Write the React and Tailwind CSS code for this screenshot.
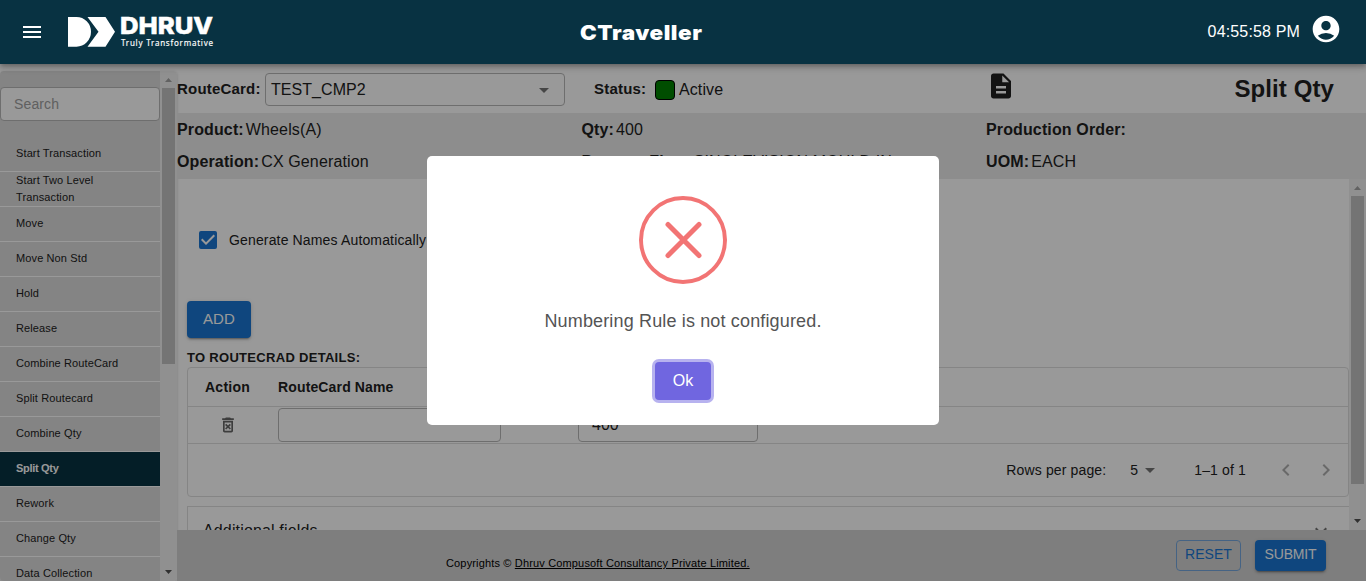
import React from 'react';
import { MdMenu, MdAccountCircle, MdDescription, MdArrowDropDown, MdChevronLeft, MdChevronRight, MdExpandMore, MdOutlineDeleteForever, MdCheckBox } from 'react-icons/md';

const items = [
  'Start Transaction',
  'Start Two Level Transaction',
  'Move',
  'Move Non Std',
  'Hold',
  'Release',
  'Combine RouteCard',
  'Split Routecard',
  'Combine Qty',
  'Split Qty',
  'Rework',
  'Change Qty',
  'Data Collection',
];

function Logo() {
  return (
    <svg width="156" height="40" viewBox="0 -3 156 40" fill="#fff" className="block">
      <path d="M1 2h8.500a14.500 14.850 0 0 1 0 29.700h-8.500z" />
      <path d="M20.500 2h18l9.500 14.850l-9.500 14.850h-18l11-14.850z" />
      <text x="53" y="19" fontFamily="Inter, sans-serif" fontWeight="800" fontSize="23" textLength="93" lengthAdjust="spacingAndGlyphs" stroke="#fff" strokeWidth="0.500">DHRUV</text>
      <text x="54" y="30.500" fontFamily="'Noto Sans', sans-serif" fontWeight="400" fontSize="8" textLength="92" stroke="#fff" strokeWidth="0.150">Truly Transformative</text>
    </svg>
  );
}

function Header() {
  return (
    <header className="relative z-20 flex h-16 shrink-0 items-center bg-[#083242] text-white shadow-[0_2px_4px_-1px_rgba(0,0,0,0.2),0_4px_5px_0_rgba(0,0,0,0.14),0_1px_10px_0_rgba(0,0,0,0.12)]">
      <div className="flex w-[580px] items-center pl-5">
        <MdMenu size={24} />
        <div className="ml-[23px]"><Logo /></div>
      </div>
      <div className="grow">
        <h1 className="w-fit origin-left scale-x-[1.120] pt-[1px] text-[20px] leading-8 font-black tracking-[0.500px] font-['Inter',sans-serif]">CTraveller</h1>
      </div>
      <span className="mr-[10px] text-[16px] tracking-[0.15px]">04:55:58 PM</span>
      <MdAccountCircle size={32} className="relative -top-[3px] mr-[24px]" />
    </header>
  );
}

function ScrollBar({ thumb }) {
  return (
    <div className="flex w-[17px] shrink-0 flex-col items-center bg-[#f1f1f1]">
      <svg width="17" height="17" viewBox="0 0 17 17" className="shrink-0"><path d="M5 11h7l-3.500-4z" fill="#a3a3a3" /></svg>
      <div className={'w-[13px] shrink-0 bg-[#c1c1c1] ' + thumb} />
      <svg width="17" height="17" viewBox="0 0 17 17" className="mt-auto shrink-0"><path d="M5 6h7l-3.500 4z" fill="#505050" /></svg>
    </div>
  );
}

function Sidebar() {
  return (
    <aside className="flex w-[177px] shrink-0 pt-[7px]">
      <div className="flex grow overflow-hidden rounded shadow-[0_1px_3px_rgba(0,0,0,0.2)]">
        <div className="w-40 shrink-0 overflow-hidden bg-[#dcdcdc] pt-4">
          <div className="flex h-[34px] items-center rounded border border-[#b7b7b7] bg-white pl-[13px] text-[14px] tracking-[0.13px] text-[#a0a0a0]">Search</div>
          <ul className="mt-4">
            {items.map((t) => (
              <li
                key={t}
                className={
                  'flex h-[35px] items-center border-b border-white pr-8 pl-4 text-[11px] leading-[17px] ' +
                  (t === 'Split Qty' ? 'bg-[#083242] font-bold tracking-[-0.300px] text-white ' : 'tracking-[0.120px] text-[#212121] ') +
                  (t === 'Start Two Level Transaction' ? '' : 'pb-[2px]')
                }
              >
                {t}
              </li>
            ))}
          </ul>
        </div>
        <ScrollBar thumb="h-[276px]" />
      </div>
    </aside>
  );
}

function Field({ label, value }) {
  return (
    <div className="flex h-8 items-center gap-[2px] pt-[2px] text-[16px] whitespace-nowrap">
      <b className="tracking-[0.130px]">{label}</b>
      <span className="tracking-[0.130px]">{value}</span>
    </div>
  );
}

function RouteCardBar() {
  return (
    <div className="flex h-[49px] shrink-0 items-center">
      <b className="w-[88px] pt-[2px] text-[15px] tracking-[0.200px]">RouteCard:</b>
      <div className="mt-[2px] flex h-[33px] w-[300px] items-center justify-between rounded border border-[#b7b7b7] pr-2 pl-[5px] text-[16px] tracking-[0.050px]">
        TEST_CMP2
        <MdArrowDropDown size={24} className="text-[#757575]" />
      </div>
      <b className="ml-[29px] w-[61px] pt-[2px] text-[15px] tracking-[0.200px]">Status:</b>
      <span className="mt-[3px] h-5 w-5 rounded border border-black bg-[#008000]" />
      <span className="ml-1 w-[307px] pt-[2px] text-[16px] tracking-[0.1px]">Active</span>
      <MdDescription size={30} className="-mt-[6px]" />
      <h2 className="ml-auto pr-[32px] text-[24px] font-bold tracking-[0.100px]">Split Qty</h2>
    </div>
  );
}

function SplitTable() {
  return (
    <div className="flex h-[130px] shrink-0 flex-col rounded border border-[#dedede] text-[14px]">
      <div className="flex h-[39px] shrink-0 items-center border-b border-[#dedede] pl-[17px] font-bold">
        <span className="w-[73px] tracking-[0.250px]">Action</span>
        <span className="tracking-[0.140px]">RouteCard Name</span>
      </div>
      <div className="flex h-[37px] shrink-0 items-start border-b border-[#dedede] pt-[1px]">
        <div className="flex h-[34px] w-[90px] items-center justify-center pr-[10px]">
          <MdOutlineDeleteForever size={20} className="text-[#666]" />
        </div>
        <div className="h-[34px] w-[223px] rounded border border-[#b7b7b7]" />
        <div className="ml-[77px] flex h-[34px] w-[180px] items-center rounded border border-[#b7b7b7] pl-[13px] text-[16px]">400</div>
      </div>
      <div className="flex grow items-center justify-end pr-[10px] tracking-[0.140px]">
        <span>Rows per page:</span>
        <span className="ml-6">5</span>
        <MdArrowDropDown size={24} className="text-[#757575]" />
        <span className="ml-8">1–1 of 1</span>
        <MdChevronLeft size={24} className="ml-7 text-[#b0b0b0]" />
        <MdChevronRight size={24} className="ml-4 text-[#b0b0b0]" />
      </div>
    </div>
  );
}

function Content() {
  return (
    <div className="flex h-[351px] shrink-0">
      <div className="flex min-w-0 grow flex-col items-stretch overflow-hidden pl-[10px]">
        <div className="flex h-[122px] shrink-0 items-center pl-[9px] text-[14px] tracking-[0.15px]">
          <MdCheckBox size={24} className="text-[#1976d2]" />
          <span className="ml-[9px]">Generate Names Automatically</span>
        </div>
        <button className="h-[37px] w-16 shrink-0 rounded bg-[#1976d2] text-[15px] tracking-[0.100px] text-white shadow-[0_3px_1px_-2px_rgba(0,0,0,0.2),0_2px_2px_0_rgba(0,0,0,0.14),0_1px_5px_0_rgba(0,0,0,0.12)]">ADD</button>
        <h3 className="mt-[9px] mb-[2px] h-[18px] shrink-0 text-[13px] leading-[21px] font-semibold tracking-[0.300px]">TO ROUTECRAD DETAILS:</h3>
        <SplitTable />
        <div className="mt-[9px] flex h-12 shrink-0 items-center justify-between border-t border-l border-[#dedede] pr-4 pl-[15px] text-[16px] tracking-[0.15px]">
          Additional fields
          <MdExpandMore size={24} className="text-[#757575]" />
        </div>
      </div>
      <ScrollBar thumb="h-[288px]" />
    </div>
  );
}

function Footer() {
  return (
    <footer className="flex grow items-start bg-[#d3d3d3] pt-[10px] pr-10">
      <p className="mt-[15px] ml-[269px] text-[11px] leading-4 tracking-[0.155px] text-black">
        Copyrights © <a className="underline">Dhruv Compusoft Consultancy Private Limited.</a>
      </p>
      <button className="ml-auto h-[31px] w-[65px] rounded border border-[#74a6dc] pb-[2px] text-[14px] tracking-[0.020px] text-[#1976d2]">RESET</button>
      <button className="ml-[14px] h-[31px] w-[71px] rounded bg-[#1976d2] pb-[2px] text-[14px] tracking-[-0.150px] text-white shadow-[0_3px_1px_-2px_rgba(0,0,0,0.2),0_2px_2px_0_rgba(0,0,0,0.14),0_1px_5px_0_rgba(0,0,0,0.12)]">SUBMIT</button>
    </footer>
  );
}

function ErrorDialog() {
  return (
    <div className="absolute inset-0 z-10 flex items-center justify-center bg-black/40">
      <div className="flex h-[269px] w-[512px] flex-col items-center rounded-[5px] bg-white pt-10 text-[#545454]">
        <svg width="88" height="88" viewBox="0 0 88 88" fill="none" stroke="#f27474" className="shrink-0">
          <circle cx="44" cy="44" r="42" strokeWidth="4" />
          <path d="M29 28.500l31 31M60 28.500l-31 31" strokeWidth="5" strokeLinecap="round" />
        </svg>
        <p className="mt-[23px] text-[18px] leading-7 tracking-[0.15px]">Numbering Rule is not configured.</p>
        <button className="mt-[27px] h-[38px] w-14 rounded bg-[#7066e0] text-[16px] text-white shadow-[0_0_0_3px_rgba(112,102,224,0.5)]">Ok</button>
      </div>
    </div>
  );
}

export default function App() {
  return (
    <div className="relative flex h-[581px] w-[1366px] flex-col overflow-hidden bg-white font-['Liberation_Sans',Arial,sans-serif] text-[#212121]">
      <Header />
      <div className="flex min-h-0 grow">
        <Sidebar />
        <main className="flex min-w-0 grow flex-col">
          <RouteCardBar />
          <section className="grid h-[66px] shrink-0 grid-cols-[404.5px_404.5px_1fr] content-start bg-[#ececec]">
            <Field label="Product:" value="Wheels(A)" />
            <Field label="Qty:" value="400" />
            <Field label="Production Order:" value="" />
            <Field label="Operation:" value="CX Generation" />
            <Field label="Process Flow:" value="SINGLEVISION MOULD IN" />
            <Field label="UOM:" value="EACH" />
          </section>
          <Content />
          <Footer />
        </main>
      </div>
      <ErrorDialog />
    </div>
  );
}
